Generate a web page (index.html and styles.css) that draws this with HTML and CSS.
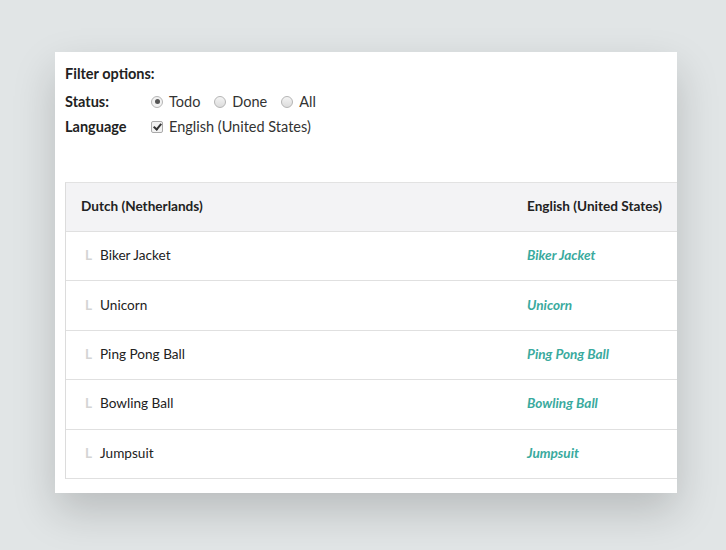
FILE: index.html
```html
<!DOCTYPE html>
<html lang="en">
<head>
    <meta charset="UTF-8">
    <meta name="viewport" content="width=device-width, initial-scale=1.0">
    <title>Translations</title>
    <link rel="stylesheet" href="styles.css">
</head>
<body>
    <div class="panel">
        <div class="filters">
            <div class="filters-title">Filter options:</div>
            <div class="filter-row">
                <span class="filter-label">Status:</span>
                <span class="option"><span class="radio checked"></span>Todo</span>
                <span class="option"><span class="radio"></span>Done</span>
                <span class="option"><span class="radio"></span>All</span>
            </div>
            <div class="filter-row">
                <span class="filter-label">Language</span>
                <span class="option"><span class="checkbox checked"></span>English (United States)</span>
            </div>
        </div>

        <div class="table">
            <div class="table-head">
                <div class="col-source">Dutch (Netherlands)</div>
                <div class="col-target">English (United States)</div>
            </div>
            <div class="table-row">
                <div class="col-source"><span class="tree">L</span>Biker Jacket</div>
                <div class="col-target"><a class="translation">Biker Jacket</a></div>
            </div>
            <div class="table-row">
                <div class="col-source"><span class="tree">L</span>Unicorn</div>
                <div class="col-target"><a class="translation">Unicorn</a></div>
            </div>
            <div class="table-row">
                <div class="col-source"><span class="tree">L</span>Ping Pong Ball</div>
                <div class="col-target"><a class="translation">Ping Pong Ball</a></div>
            </div>
            <div class="table-row">
                <div class="col-source"><span class="tree">L</span>Bowling Ball</div>
                <div class="col-target"><a class="translation">Bowling Ball</a></div>
            </div>
            <div class="table-row">
                <div class="col-source"><span class="tree">L</span>Jumpsuit</div>
                <div class="col-target"><a class="translation">Jumpsuit</a></div>
            </div>
        </div>
    </div>
</body>
</html>
```

FILE: styles.css
```css
body {
    margin: 0;
    height: 550px;
    overflow: hidden;
    background: #e1e5e6;
    font-family: 'Lato', sans-serif;
    color: #222;
}

.panel {
    margin: 52px 0 0 55px;
    width: 622px;
    height: 441px;
    box-sizing: border-box;
    padding: 13px 0 0 10px;
    background-color: #fff;
    overflow: hidden;
    box-shadow: 0 18px 40px rgba(0, 0, 0, 0.18);
}

.filters {
    font-size: 14.5px;
    height: 117px;
}

.filters-title {
    font-weight: bold;
    height: 22px;
    line-height: 18px;
    margin-bottom: 2px;
}

.filter-row {
    display: flex;
    align-items: center;
    height: 25px;
}

.filter-label {
    width: 86px;
    font-weight: bold;
}

.option {
    display: flex;
    align-items: center;
    margin-right: 14px;
    color: #333;
}

.radio {
    width: 10px;
    height: 10px;
    border: 1px solid #b5b5b5;
    border-radius: 50%;
    background: linear-gradient(#f4f4f4, #dcdcdc);
    margin-right: 6px;
    position: relative;
}

.radio.checked {
    background: #f2f2f2;
}

.radio.checked::after {
    content: '';
    position: absolute;
    left: 2.5px;
    top: 2.5px;
    width: 5px;
    height: 5px;
    border-radius: 50%;
    background: #555;
}

.checkbox {
    width: 10px;
    height: 10px;
    border: 1px solid #aaa;
    border-radius: 2px;
    background: #f2f2f2;
    margin-right: 6px;
    position: relative;
}

.checkbox.checked::after {
    content: '';
    position: absolute;
    left: 3px;
    top: 0.5px;
    width: 3px;
    height: 6px;
    border: solid #333;
    border-width: 0 2px 2px 0;
    transform: rotate(40deg);
}

.table {
    width: 660px;
    border-left: 1px solid #dcdcdc;
    border-top: 1px solid #e2e2e2;
    font-size: 13.6px;
}

.table-head,
.table-row {
    display: flex;
    align-items: center;
    box-sizing: border-box;
    border-bottom: 1px solid #e0e0e0;
}

.table-head {
    height: 49px;
    padding-bottom: 2px;
    background: #f3f3f5;
    font-weight: bold;
}

.table-row {
    height: 49.4px;
    padding-bottom: 2px;
}

.col-source {
    width: 461px;
    box-sizing: border-box;
    padding-left: 19px;
    display: flex;
    align-items: center;
}

.table-head .col-source {
    padding-left: 15px;
}

.col-target {
    flex: 1;
}

.tree {
    color: #d4d4d4;
    font-size: 13.6px;
    font-weight: bold;
    width: 15px;
}

.translation {
    color: #3aaa9e;
    font-weight: bold;
    font-style: italic;
}
```
